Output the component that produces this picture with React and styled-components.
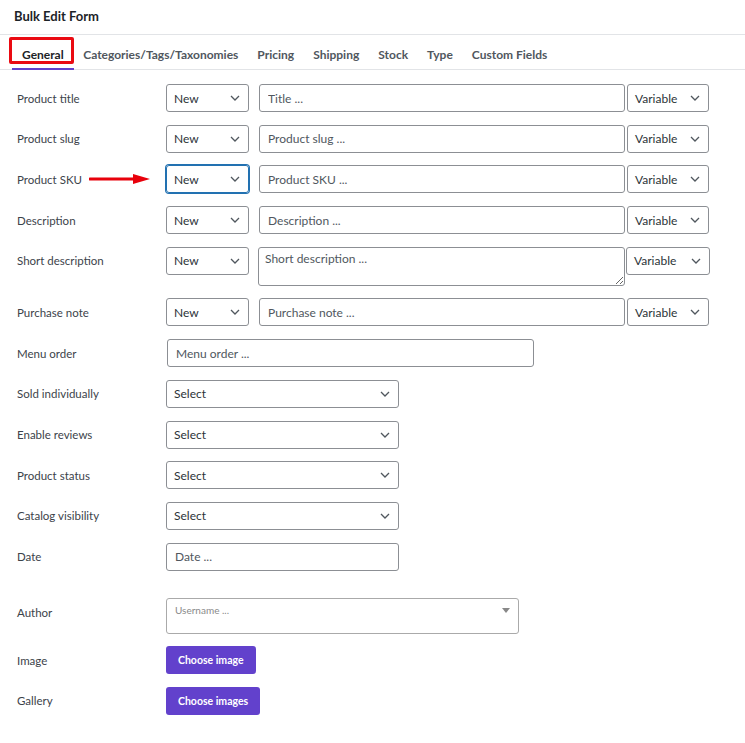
import React from "react";
import styled, { createGlobalStyle } from "styled-components";

const GlobalStyle = createGlobalStyle`
  body {
    margin: 0;
    background: #fff;
    font-family: Lato, "Open Sans", sans-serif;
    color: #1d2327;
  }
  * { box-sizing: border-box; }
`;

const Page = styled.div`
  width: 745px;
  padding-bottom: 20px;
`;

const Title = styled.div`
  height: 35px;
  padding: 8px 14px 0;
  font-size: 13px;
  font-weight: 700;
  color: #1d2327;
  border-bottom: 1px solid #e2e4e7;
`;

const Tabs = styled.div`
  display: flex;
  align-items: flex-end;
  height: 35px;
  padding-left: 12px;
  border-bottom: 1px solid #e2e4e7;
`;

const Tab = styled.div`
  position: relative;
  padding: 0 ${(p) => (p.$active ? 10 : 9.5)}px 6px;
  line-height: 15px;
  font-size: 12px;
  font-weight: 700;
  color: ${(p) => (p.$active ? "#1d2327" : "#50575e")};
  border-bottom: 2px solid ${(p) => (p.$active ? "#6241cc" : "transparent")};
  margin-bottom: -1px;
  ${(p) =>
    p.$active &&
    `
    &::before {
      content: "";
      position: absolute;
      left: -3px;
      right: 0;
      top: -10px;
      bottom: 4px;
      border: 3px solid #ea0a12;
      border-radius: 2px;
    }
  `}
`;

const Form = styled.div`
  display: flex;
  flex-direction: column;
  gap: 12.7px;
  padding: 14px 0 0 17px;
`;

const Row = styled.div`
  display: flex;
  align-items: flex-start;
  min-height: 28px;
  margin-top: ${(p) => p.$mt || 0}px;
`;

const Label = styled.div`
  width: 149px;
  flex: none;
  display: flex;
  align-items: center;
  height: ${(p) => p.$h || 28}px;
  font-size: 11.5px;
  color: #3c434a;
`;

const Select = styled.div`
  display: flex;
  align-items: center;
  justify-content: space-between;
  flex: none;
  width: ${(p) => p.$w}px;
  height: 28px;
  margin-left: ${(p) => p.$ml || 0}px;
  padding: 0 8px 0 7px;
  border: 1px solid ${(p) => (p.$focus ? "#2271b1" : "#8c8f94")};
  box-shadow: ${(p) => (p.$focus ? "0 0 0 1px #2271b1" : "none")};
  border-radius: 3px;
  font-size: 12px;
  color: #2c3338;
  svg { flex: none; }
`;

const Input = styled.input`
  flex: none;
  width: ${(p) => p.$w}px;
  height: 28px;
  margin-left: ${(p) => p.$ml || 0}px;
  padding: 0 8px;
  border: 1px solid #8c8f94;
  border-radius: 3px;
  font-family: inherit;
  font-size: 12px;
  color: #2c3338;
  outline: none;
  &::placeholder { color: #50575e; }
`;

const TextArea = styled.textarea`
  flex: none;
  width: 367px;
  height: 39px;
  margin-left: 9px;
  padding: 3px 6px;
  border: 1px solid #8c8f94;
  border-radius: 3px;
  font-family: inherit;
  font-size: 12px;
  outline: none;
  &::placeholder { color: #50575e; }
`;

const Combo = styled.div`
  display: flex;
  justify-content: space-between;
  width: 353px;
  height: 36px;
  padding: 5px 8px 0 8px;
  border: 1px solid #aaa;
  border-radius: 3px;
  font-size: 10px;
  color: #8a8a8a;
`;

const Caret = styled.span`
  margin-top: 4px;
  width: 0;
  height: 0;
  border-left: 4px solid transparent;
  border-right: 4px solid transparent;
  border-top: 5px solid #888;
`;

const Button = styled.button`
  height: 28px;
  padding: 0 12px;
  border: none;
  border-radius: 3px;
  background: #6241cc;
  color: #fff;
  font-family: inherit;
  font-size: 10.5px;
  font-weight: 700;
`;

const ArrowWrap = styled.div`
  position: relative;
  width: 0;
  svg {
    position: absolute;
    left: -77px;
    top: 8px;
  }
`;

function Chevron() {
  return (
    <svg width="10" height="6" viewBox="0 0 10 6">
      <path d="M1 1l4 4 4-4" fill="none" stroke="#50575e" strokeWidth="1.3" />
    </svg>
  );
}

function Arrow() {
  return (
    <svg width="62" height="12" viewBox="0 0 62 12">
      <line x1="1" y1="6" x2="46" y2="6" stroke="#e8000b" strokeWidth="3" strokeLinecap="round" />
      <polygon points="44,1 61,6 44,11" fill="#e8000b" />
    </svg>
  );
}

const tabs = [
  "General",
  "Categories/Tags/Taxonomies",
  "Pricing",
  "Shipping",
  "Stock",
  "Type",
  "Custom Fields",
];

const triRows = [
  { label: "Product title", ph: "Title ..." },
  { label: "Product slug", ph: "Product slug ..." },
  { label: "Product SKU", ph: "Product SKU ...", focus: true },
  { label: "Description", ph: "Description ..." },
];

const selectRows = [
  "Sold individually",
  "Enable reviews",
  "Product status",
  "Catalog visibility",
];

export default function App() {
  return (
    <Page>
      <GlobalStyle />
      <Title>Bulk Edit Form</Title>
      <Tabs>
        {tabs.map((t, i) => (
          <Tab key={t} $active={i === 0}>
            {t}
          </Tab>
        ))}
      </Tabs>
      <Form>
        {triRows.map((r) => (
          <Row key={r.label}>
            <Label>{r.label}</Label>
            {r.focus && (
              <ArrowWrap>
                <Arrow />
              </ArrowWrap>
            )}
            <Select $w={83} $focus={r.focus}>
              New <Chevron />
            </Select>
            <Input $w={366} $ml={10} placeholder={r.ph} />
            <Select $w={82} $ml={2}>
              Variable <Chevron />
            </Select>
          </Row>
        ))}
        <Row>
          <Label>Short description</Label>
          <Select $w={83}>
            New <Chevron />
          </Select>
          <TextArea placeholder="Short description ..." />
          <Select $w={84} $ml={1}>
            Variable <Chevron />
          </Select>
        </Row>
        <Row>
          <Label>Purchase note</Label>
          <Select $w={83}>
            New <Chevron />
          </Select>
          <Input $w={366} $ml={10} placeholder="Purchase note ..." />
          <Select $w={82} $ml={2}>
            Variable <Chevron />
          </Select>
        </Row>
        <Row>
          <Label>Menu order</Label>
          <Input $w={367} $ml={1} placeholder="Menu order ..." />
        </Row>
        {selectRows.map((l) => (
          <Row key={l}>
            <Label>{l}</Label>
            <Select $w={233}>
              Select <Chevron />
            </Select>
          </Row>
        ))}
        <Row>
          <Label>Date</Label>
          <Input $w={233} placeholder="Date ..." />
        </Row>
        <Row $mt={14.3}>
          <Label $h={30}>Author</Label>
          <Combo>
            Username ...
            <Caret />
          </Combo>
        </Row>
        <Row>
          <Label>Image</Label>
          <Button>Choose image</Button>
        </Row>
        <Row>
          <Label>Gallery</Label>
          <Button>Choose images</Button>
        </Row>
      </Form>
    </Page>
  );
}
